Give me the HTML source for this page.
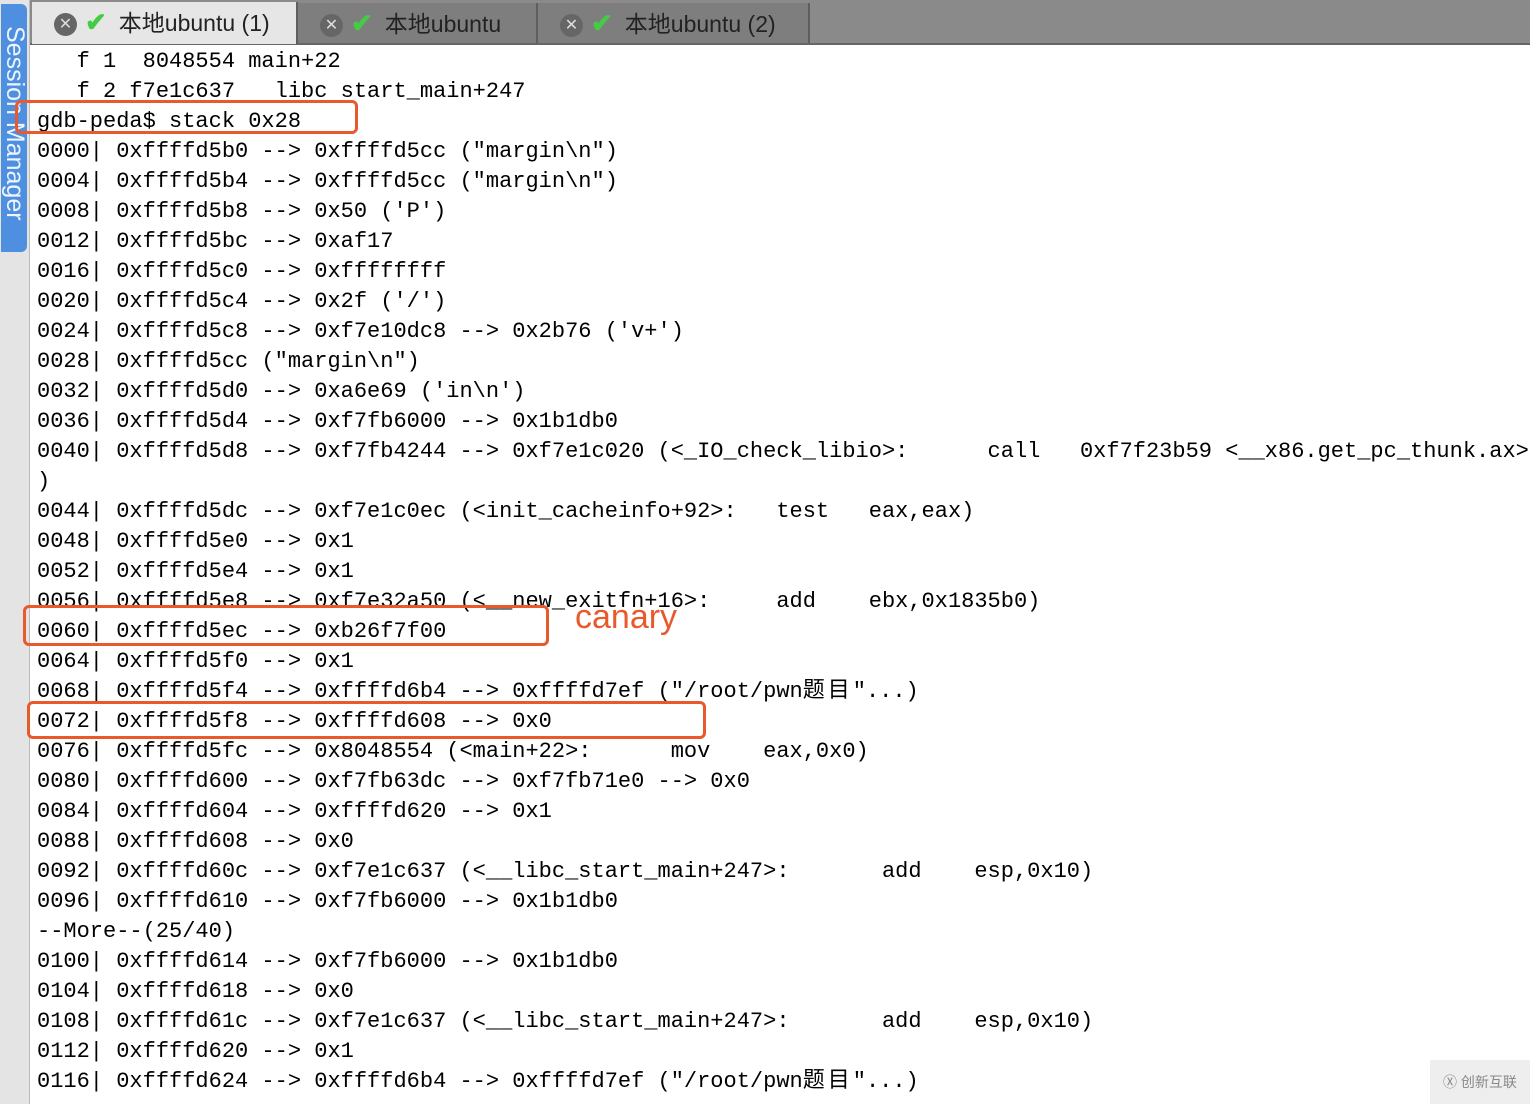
<!DOCTYPE html><html><head><meta charset="utf-8"><style>
body{margin:0;width:1530px;height:1104px;overflow:hidden;background:#fff;position:relative;font-family:"Liberation Sans","Noto Sans CJK SC",sans-serif}
#side{position:absolute;left:0;top:0;width:29px;height:1104px;background:#e4e4e4;border-right:1px solid #bbb}
#stab{position:absolute;left:1px;top:4px;width:26px;height:248px;background:#4f8fe0;border-radius:0 6px 6px 0;overflow:hidden}
#stab span{position:absolute;top:22px;transform:rotate(90deg);transform-origin:0 0;left:28px;color:#fff;font-size:25px;white-space:nowrap;opacity:.9}
#bar{position:absolute;left:30px;top:0;right:0;height:43px;background:#8a8a8a;border-bottom:2px solid #666}
.tab{position:absolute;top:3px;height:40px;background:#7e7e7e;border-right:2px solid #5e5e5e;font-size:23px;color:#222;line-height:40px}
.tab.a{background:#e6e6e6;top:2px;height:42px}
.x{display:inline-block;width:23px;height:23px;border-radius:50%;background:#666;color:#ddd;font-size:16px;line-height:23px;text-align:center;vertical-align:middle;margin:0 8px 0 22px}
.c{color:#4c4;font-weight:bold;font-size:26px;margin-right:12px}
#t{position:absolute;left:37px;top:47px;font-family:"Liberation Mono","Noto Sans CJK SC",monospace;font-size:22px;line-height:30px;white-space:pre;color:#000}
.k{letter-spacing:3px}
.b{position:absolute;border:3px solid #e85a2c;border-radius:6px}
</style></head><body>
<div id="side"><div id="stab"><span>Session Manager</span></div></div>
<div id="bar">
<div class="tab a" style="left:2px;width:264px"><span class="x">✕</span><span class="c">✔</span>本地ubuntu (1)</div>
<div class="tab" style="left:268px;width:238px"><span class="x">✕</span><span class="c">✔</span>本地ubuntu</div>
<div class="tab" style="left:508px;width:270px"><span class="x">✕</span><span class="c">✔</span>本地ubuntu (2)</div>
</div>
<div id="t">   f 1  8048554 main+22
   f 2 f7e1c637   libc start_main+247
gdb-peda$ stack 0x28
0000| 0xffffd5b0 --> 0xffffd5cc ("margin\n")
0004| 0xffffd5b4 --> 0xffffd5cc ("margin\n")
0008| 0xffffd5b8 --> 0x50 ('P')
0012| 0xffffd5bc --> 0xaf17
0016| 0xffffd5c0 --> 0xffffffff
0020| 0xffffd5c4 --> 0x2f ('/')
0024| 0xffffd5c8 --> 0xf7e10dc8 --> 0x2b76 ('v+')
0028| 0xffffd5cc ("margin\n")
0032| 0xffffd5d0 --> 0xa6e69 ('in\n')
0036| 0xffffd5d4 --> 0xf7fb6000 --> 0x1b1db0
0040| 0xffffd5d8 --> 0xf7fb4244 --> 0xf7e1c020 (&lt;_IO_check_libio&gt;:      call   0xf7f23b59 &lt;__x86.get_pc_thunk.ax&gt;
)
0044| 0xffffd5dc --> 0xf7e1c0ec (&lt;init_cacheinfo+92&gt;:   test   eax,eax)
0048| 0xffffd5e0 --> 0x1
0052| 0xffffd5e4 --> 0x1
0056| 0xffffd5e8 --> 0xf7e32a50 (&lt;__new_exitfn+16&gt;:     add    ebx,0x1835b0)
0060| 0xffffd5ec --> 0xb26f7f00
0064| 0xffffd5f0 --> 0x1
0068| 0xffffd5f4 --> 0xffffd6b4 --> 0xffffd7ef ("/root/pwn<span class="k">题目</span>"...)
0072| 0xffffd5f8 --> 0xffffd608 --> 0x0
0076| 0xffffd5fc --> 0x8048554 (&lt;main+22&gt;:      mov    eax,0x0)
0080| 0xffffd600 --> 0xf7fb63dc --> 0xf7fb71e0 --> 0x0
0084| 0xffffd604 --> 0xffffd620 --> 0x1
0088| 0xffffd608 --> 0x0
0092| 0xffffd60c --> 0xf7e1c637 (&lt;__libc_start_main+247&gt;:       add    esp,0x10)
0096| 0xffffd610 --> 0xf7fb6000 --> 0x1b1db0
--More--(25/40)
0100| 0xffffd614 --> 0xf7fb6000 --> 0x1b1db0
0104| 0xffffd618 --> 0x0
0108| 0xffffd61c --> 0xf7e1c637 (&lt;__libc_start_main+247&gt;:       add    esp,0x10)
0112| 0xffffd620 --> 0x1
0116| 0xffffd624 --> 0xffffd6b4 --> 0xffffd7ef ("/root/pwn<span class="k">题目</span>"...)</div>
<div class="b" style="left:15px;top:100px;width:337px;height:28px"></div>
<div class="b" style="left:23px;top:605px;width:520px;height:35px"></div>
<div class="b" style="left:27px;top:701px;width:673px;height:32px"></div>
<div style="position:absolute;left:575px;top:598px;color:#e85a2c;font-size:34px">canary</div>
<div style="position:absolute;left:1430px;top:1060px;width:100px;height:44px;background:#eee;color:#888;font-size:14px;line-height:44px;text-align:center">Ⓧ 创新互联</div>
</body></html>
